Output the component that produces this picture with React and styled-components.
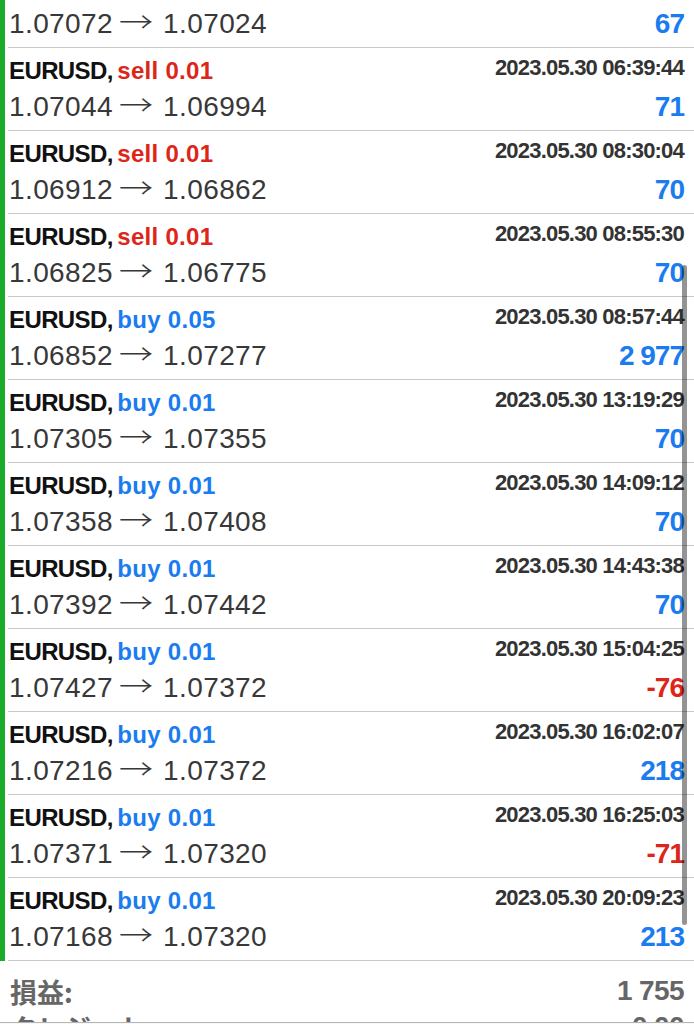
import styled, { createGlobalStyle } from "styled-components";

const GlobalStyle = createGlobalStyle`
  html, body {
    margin: 0;
    padding: 0;
    background: #fff;
  }
  body {
    font-family: "Liberation Sans", Arial, "Noto Sans CJK JP", sans-serif;
  }
`;

const deals = [
  { side: "sell", lot: "0.01", time: "2023.05.30 04:58:17", open: "1.07072", close: "1.07024", profit: "67" },
  { side: "sell", lot: "0.01", time: "2023.05.30 06:39:44", open: "1.07044", close: "1.06994", profit: "71" },
  { side: "sell", lot: "0.01", time: "2023.05.30 08:30:04", open: "1.06912", close: "1.06862", profit: "70" },
  { side: "sell", lot: "0.01", time: "2023.05.30 08:55:30", open: "1.06825", close: "1.06775", profit: "70" },
  { side: "buy", lot: "0.05", time: "2023.05.30 08:57:44", open: "1.06852", close: "1.07277", profit: "2 977" },
  { side: "buy", lot: "0.01", time: "2023.05.30 13:19:29", open: "1.07305", close: "1.07355", profit: "70" },
  { side: "buy", lot: "0.01", time: "2023.05.30 14:09:12", open: "1.07358", close: "1.07408", profit: "70" },
  { side: "buy", lot: "0.01", time: "2023.05.30 14:43:38", open: "1.07392", close: "1.07442", profit: "70" },
  { side: "buy", lot: "0.01", time: "2023.05.30 15:04:25", open: "1.07427", close: "1.07372", profit: "-76" },
  { side: "buy", lot: "0.01", time: "2023.05.30 16:02:07", open: "1.07216", close: "1.07372", profit: "218" },
  { side: "buy", lot: "0.01", time: "2023.05.30 16:25:03", open: "1.07371", close: "1.07320", profit: "-71" },
  { side: "buy", lot: "0.01", time: "2023.05.30 20:09:23", open: "1.07168", close: "1.07320", profit: "213" },
];

const RED = "#dd2619";
const BLUE = "#1a7cf0";

const App = () => {
  return (
    <>
      <GlobalStyle />
      <Screen>
        <Viewport>
          <List>
            {deals.map((d, i) => (
              <Row key={i}>
                <GreenBar />
                <Body>
                  <Line>
                    <span>
                      <Symbol>EURUSD,</Symbol>{" "}
                      <Action $color={d.side === "sell" ? RED : BLUE}>
                        {d.side} {d.lot}
                      </Action>
                    </span>
                    <DateText>{d.time}</DateText>
                  </Line>
                  <Line>
                    <Price>
                      {d.open}
                      <Arrow>→</Arrow>
                      {d.close}
                    </Price>
                    <Value $color={d.profit.startsWith("-") ? RED : BLUE}>
                      {d.profit}
                    </Value>
                  </Line>
                </Body>
              </Row>
            ))}
          </List>
          <Summary>
            <SummaryLine>
              <Label>損益:</Label>
              <Amount>1 755</Amount>
            </SummaryLine>
            <SummaryLine>
              <Label>クレジット:</Label>
              <Amount>0.00</Amount>
            </SummaryLine>
          </Summary>
        </Viewport>
        <TabBar />
        <ScrollThumb />
      </Screen>
    </>
  );
};

const Screen = styled.div`
  position: relative;
  width: 694px;
  height: 1024px;
  overflow: hidden;
  display: flex;
  flex-direction: column;
  background: #fff;
`;

const Viewport = styled.div`
  flex: 1;
  overflow: hidden;
`;

const List = styled.div`
  margin-top: -35px;
`;

const Row = styled.div`
  display: flex;
`;

const GreenBar = styled.div`
  width: 5px;
  flex-shrink: 0;
  background: #1aab2b;
`;

const Body = styled.div`
  flex: 1;
  margin-left: 3px;
  padding: 5px 10px 5px 1px;
  border-bottom: 1px solid #c9c9c9;
  display: flex;
  flex-direction: column;
`;

const Line = styled.div`
  height: 36px;
  display: flex;
  justify-content: space-between;
  align-items: center;
  white-space: nowrap;
`;

const Symbol = styled.span`
  font-size: 24px;
  font-weight: 700;
  letter-spacing: -0.6px;
  color: #111;
`;

const Action = styled.span`
  font-size: 24px;
  font-weight: 700;
  letter-spacing: 0.3px;
  color: ${(p) => p.$color};
`;

const DateText = styled.span`
  font-size: 22px;
  font-weight: 700;
  letter-spacing: -0.8px;
  color: #333;
  margin-bottom: 6px;
`;

const Price = styled.span`
  font-size: 28px;
  line-height: 36px;
  color: #383838;
  letter-spacing: 0.4px;
`;

const Arrow = styled.span`
  display: inline-block;
  font-family: "Noto Sans CJK JP", "DejaVu Sans", sans-serif;
  font-size: 28px;
  font-weight: 300;
  line-height: 1;
  margin: 0 13px 0 9px;
  letter-spacing: 0;
  transform: scaleX(1.22);
`;

const Value = styled.span`
  font-size: 28px;
  font-weight: 700;
  letter-spacing: -1px;
  color: ${(p) => p.$color};
`;

const Summary = styled.div`
  padding: 12px 10px 0 10px;
`;

const SummaryLine = styled.div`
  height: 36px;
  display: flex;
  justify-content: space-between;
  align-items: center;
`;

const Label = styled.span`
  font-family: "Noto Sans CJK JP", "Liberation Sans", sans-serif;
  font-size: 27px;
  font-weight: 700;
  color: #666;
`;

const Amount = styled.span`
  font-size: 28px;
  font-weight: 700;
  letter-spacing: -0.6px;
  color: #666;
`;

const TabBar = styled.div`
  height: 1px;
  border-top: 1px solid #b5b5b5;
  background: #f7f7f7;
`;

const ScrollThumb = styled.div`
  position: absolute;
  right: 7px;
  top: 265px;
  width: 5px;
  height: 660px;
  border-radius: 3px;
  background: rgba(0, 0, 0, 0.42);
`;

export default App;
